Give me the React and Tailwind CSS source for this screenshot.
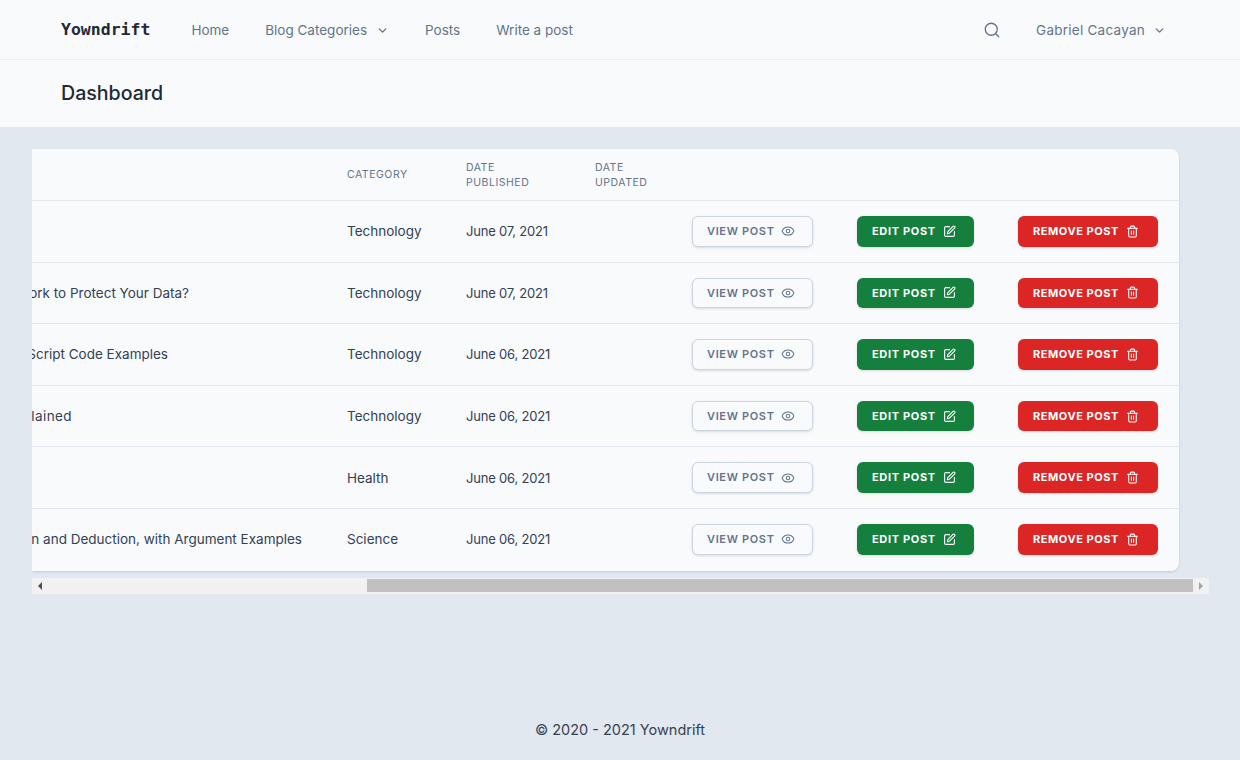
import { ChevronDown, Eye, Search, SquarePen, Trash2 } from 'lucide-react';

const posts = [
  { title: '', titlePad: 'pr-0', category: 'Technology', date: 'June 07, 2021' },
  { title: 'How Does Encryption Work to Protect Your Data?', titlePad: 'pr-[134px]', category: 'Technology', date: 'June 07, 2021' },
  { title: 'JavaScript Code Examples', titlePad: 'pr-[155px]', category: 'Technology', date: 'June 06, 2021' },
  { title: 'Explained', titlePad: 'pr-[251px] tracking-[0.4px]', category: 'Technology', date: 'June 06, 2021' },
  { title: '', titlePad: 'pr-0', category: 'Health', date: 'June 06, 2021' },
  { title: 'Induction and Deduction, with Argument Examples', titlePad: 'pr-[21px]', category: 'Science', date: 'June 06, 2021' },
];

function NavLink({ children }) {
  return <a className="text-[13.5px] text-[#64748b]">{children}</a>;
}

function PostRow({ post }) {
  const cell = 'border-t border-[#e2e8f0] py-[15px]';
  return (
    <tr>
      <td className={`${cell} pl-0`}>
        <div className={`flex justify-end overflow-hidden whitespace-nowrap text-[13.5px] leading-5 text-[#334155] ${post.titlePad}`}>
          <span className="shrink-0">{post.title}</span>
        </div>
      </td>
      <td className={`${cell} pl-6 text-[13.5px] leading-5 text-[#334155]`}>{post.category}</td>
      <td className={`${cell} pl-6 text-[13px] leading-5 tracking-[-0.2px] text-[#334155]`}>{post.date}</td>
      <td className={cell} />
      <td className={`${cell} pl-6`}>
        <button className="flex h-[30.6px] w-[121px] items-center gap-[6px] rounded-md border border-[#cbd5e1] bg-[#f8fafc] pl-[14px] text-[11px] font-semibold tracking-[0.06em] text-[#64748b] shadow-sm">
          VIEW POST <Eye size={14} strokeWidth={1.75} />
        </button>
      </td>
      <td className={`${cell} pl-[22px]`}>
        <button className="flex h-[30.6px] w-[117px] items-center gap-[7px] rounded-md bg-[#15803d] pl-[15px] text-[11px] font-bold tracking-[0.06em] text-white shadow-sm">
          EDIT POST <SquarePen size={13} strokeWidth={2} />
        </button>
      </td>
      <td className={`${cell} pl-[22px]`}>
        <button className="flex h-[30.6px] w-[140px] items-center gap-[7px] rounded-md bg-[#dc2626] pl-[15px] text-[11px] font-bold tracking-[0.05em] text-white shadow-sm">
          REMOVE POST <Trash2 size={13} strokeWidth={2} />
        </button>
      </td>
    </tr>
  );
}

export default function App() {
  return (
    <div className="flex min-h-[760px] flex-col bg-[#e2e8f0] font-['Inter',sans-serif]">
      {/* Top nav */}
      <nav className="flex h-[60px] items-center border-b border-[#e9eef4] bg-[#f8fafc] pl-[61px] pr-[74px] pt-px">
        <span className="mr-[41px] font-['DejaVu_Sans_Mono',monospace] text-[16.5px] font-bold text-[#1f2937]">Yowndrift</span>
        <div className="flex items-center gap-9">
          <NavLink>Home</NavLink>
          <div className="flex items-center gap-[9px]">
            <NavLink>Blog Categories</NavLink>
            <ChevronDown size={13} strokeWidth={2.5} className="text-[#64748b]" />
          </div>
          <NavLink>Posts</NavLink>
          <NavLink>Write a post</NavLink>
        </div>
        <div className="ml-auto flex items-center">
          <Search size={18} strokeWidth={1.75} className="mr-[35px] text-[#64748b]" />
          <span className="text-[13.5px] tracking-[0.25px] text-[#64748b]">Gabriel Cacayan</span>
          <ChevronDown size={13} strokeWidth={2.5} className="ml-2 text-[#64748b]" />
        </div>
      </nav>

      {/* Page title */}
      <header className="flex h-[67px] items-center bg-[#f8fafc] pb-0.5 pl-[61px]">
        <h1 className="text-[19.6px] font-medium leading-7 text-[#1f2937]">Dashboard</h1>
      </header>

      {/* Posts table */}
      <main className="ml-8 mt-[22px] w-[1177px]">
        <div className="overflow-hidden pb-[7px]">
          <div className="w-[1147px] rounded-r-lg bg-[#f8fafc] pb-px shadow">
            <table className="w-full table-fixed border-separate border-spacing-0">
              <colgroup>
                <col className="w-[291px]" />
                <col className="w-[119px]" />
                <col className="w-[129px]" />
                <col className="w-[97px]" />
                <col className="w-[167px]" />
                <col className="w-[161px]" />
                <col className="w-[183px]" />
              </colgroup>
              <thead>
                <tr className="h-[51px] text-left text-[10.5px] leading-[15px] tracking-[0.05em] text-[#64748b]">
                  <th className="p-0" />
                  <th className="p-0 pl-6 font-normal">CATEGORY</th>
                  <th className="p-0 pl-6 font-normal">DATE<br />PUBLISHED</th>
                  <th className="p-0 pl-6 font-normal">DATE<br />UPDATED</th>
                  <th className="p-0" />
                  <th className="p-0" />
                  <th className="p-0" />
                </tr>
              </thead>
              <tbody>
                {posts.map((post, i) => (
                  <PostRow key={i} post={post} />
                ))}
              </tbody>
            </table>
          </div>
        </div>

        {/* Horizontal scrollbar */}
        <div className="flex h-4 items-center bg-[#f1f1f1]">
          <div className="flex w-4 justify-center">
            <div className="h-0 w-0 border-y-[4px] border-r-[4px] border-y-transparent border-r-[#505050]" />
          </div>
          <div className="ml-[319px] h-[13px] w-[826px] bg-[#c1c1c1]" />
          <div className="flex w-4 justify-center">
            <div className="h-0 w-0 border-y-[4px] border-l-[4px] border-y-transparent border-l-[#a3a3a3]" />
          </div>
        </div>
      </main>

      {/* Footer */}
      <footer className="mt-auto pb-[20px] text-center text-[14.5px] leading-5 text-[#374151]">
        © 2020 - 2021 Yowndrift
      </footer>
    </div>
  );
}
